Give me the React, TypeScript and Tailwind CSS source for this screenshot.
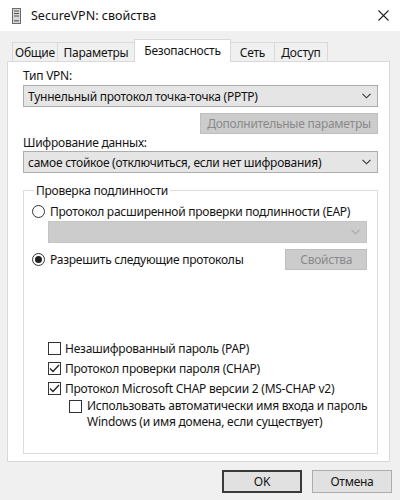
import React from "react";

const font = { fontFamily: '"Noto Sans", "Segoe UI", sans-serif' };

const Chevron = ({ color = "#333" }: { color?: string }) => (
  <svg width="9" height="6" viewBox="0 0 9 6" fill="none">
    <path d="M0.5 0.8 L4.5 4.8 L8.5 0.8" stroke={color} strokeWidth="1.1" />
  </svg>
);

const Select = ({ value, disabled }: { value?: string; disabled?: boolean }) => (
  <div
    className={`flex items-center h-[22px] pl-[4px] pr-[6px] border ${
      disabled ? "bg-[#cccccc] border-[#c4c4c4]" : "bg-[#e5e5e5] border-[#adadad]"
    }`}
  >
    <span className="flex-1 text-[12px] leading-[15px] text-[#111]">{value}</span>
    <Chevron color={disabled ? "#a8a8a8" : "#333"} />
  </div>
);

const Radio = ({ checked, label }: { checked?: boolean; label: string }) => (
  <div className="flex items-center gap-[5px] h-[15px]">
    <span className="w-[13px] h-[13px] rounded-full border border-[#333] bg-white flex items-center justify-center">
      {checked && <span className="w-[7px] h-[7px] rounded-full bg-[#222]" />}
    </span>
    <span className="text-[12px] leading-[15px]">{label}</span>
  </div>
);

const Check = ({ checked }: { checked?: boolean }) => (
  <span className="w-[13px] h-[13px] shrink-0 border border-[#333] bg-white flex items-center justify-center">
    {checked && (
      <svg width="11" height="9" viewBox="0 0 11 9" fill="none">
        <path d="M1 4.5 L4 7.5 L10 1" stroke="#222" strokeWidth="1.3" />
      </svg>
    )}
  </span>
);

const CheckRow = ({ checked, label }: { checked?: boolean; label: string }) => (
  <div className="flex items-center gap-[4px] h-[20px]">
    <Check checked={checked} />
    <span className="text-[12px] leading-[15px]">{label}</span>
  </div>
);

const tabs = [
  { name: "Общие", w: "w-[46px]" },
  { name: "Параметры", w: "w-[78px]" },
  { name: "Безопасность", w: "w-[97px]", active: true },
  { name: "Сеть", w: "w-[45px]" },
  { name: "Доступ", w: "w-[54px]" },
];

export default function App() {
  return (
    <div
      className="w-[400px] h-[500px] bg-[#f0f0f0] flex flex-col text-[#141414] tracking-[-0.25px] overflow-hidden"
      style={font}
    >
      {/* Title bar */}
      <div className="h-[31px] bg-white flex items-center pl-[12px] pr-[10px]">
        <svg width="9" height="16" viewBox="0 0 9 16">
          <rect x="0.5" y="0.5" width="8" height="15" fill="#d6d6d6" stroke="#6b6b6b" />
          <rect x="2" y="2.5" width="5" height="1" fill="#555" />
          <rect x="2" y="5" width="5" height="1" fill="#555" />
          <rect x="2" y="7.5" width="5" height="1" fill="#555" />
          <rect x="2" y="12" width="5" height="1.5" fill="#777" />
        </svg>
        <span className="ml-[10px] text-[12.5px] leading-[16px] tracking-normal text-[#111]">SecureVPN: свойства</span>
        <span className="flex-1" />
        <svg width="11" height="11" viewBox="0 0 11 11" className="mr-[1px]">
          <path d="M0.5 0.5 L10.5 10.5 M10.5 0.5 L0.5 10.5" stroke="#222" strokeWidth="1.1" />
        </svg>
      </div>

      {/* Tabs */}
      <div className="flex items-end pl-[12px] mt-[8px] h-[22px] relative z-10">
        {tabs.map((t) => (
          <div
            key={t.name}
            className={`${t.w} flex items-center justify-center text-[12px] leading-[15px] border-t border-l border-r border-[#d9d9d9] -ml-px first:ml-0 ${
              t.active ? "h-[23px] bg-white -mb-px pb-[2px]" : "h-[19px] bg-[#f0f0f0]"
            }`}
          >
            {t.name}
          </div>
        ))}
      </div>

      {/* Panel */}
      <div className="ml-[7px] w-[383px] h-[401px] bg-white border border-[#d9d9d9] pl-[15px] pr-[11px] pt-[6px] flex flex-col">
        <div className="text-[12px] leading-[15px]">Тип VPN:</div>
        <div className="mt-[2px]">
          <Select value="Туннельный протокол точка-точка (PPTP)" />
        </div>
        <div className="flex justify-end mt-[6px]">
          <div className="w-[178px] h-[21px] bg-[#cccccc] border border-[#bfbfbf] flex items-center justify-center text-[12px] text-[#8a8a8a]">
            Дополнительные параметры
          </div>
        </div>
        <div className="text-[12px] leading-[15px] mt-[1px]">Шифрование данных:</div>
        <div className="mt-[1px]">
          <Select value="самое стойкое (отключиться, если нет шифрования)" />
        </div>

        <fieldset className="mt-[10px] border border-[#dcdcdc] h-[271px] pl-[8px] pr-[10px]">
          <legend className="ml-[2px] px-[2px] text-[12px] leading-[15px]">Проверка подлинности</legend>
          <div className="mt-[6px]">
            <Radio label="Протокол расширенной проверки подлинности (EAP)" />
          </div>
          <div className="ml-[16px] mt-[2px]">
            <Select disabled />
          </div>
          <div className="flex items-center justify-between mt-[6px]">
            <Radio checked label="Разрешить следующие протоколы" />
            <div className="w-[82px] h-[21px] bg-[#cccccc] border border-[#bfbfbf] flex items-center justify-center text-[12px] text-[#8a8a8a]">
              Свойства
            </div>
          </div>
          <div className="ml-[16px] mt-[68px] flex flex-col">
            <CheckRow label="Незашифрованный пароль (PAP)" />
            <CheckRow checked label="Протокол проверки пароля (CHAP)" />
            <CheckRow checked label="Протокол Microsoft CHAP версии 2 (MS-CHAP v2)" />
            <div className="flex items-start gap-[5px] ml-[21px]">
              <span className="mt-[2px]">
                <Check />
              </span>
              <div className="flex flex-col text-[12px] leading-[16px] whitespace-nowrap">
                <span>Использовать автоматически имя входа и пароль</span>
                <span>Windows (и имя домена, если существует)</span>
              </div>
            </div>
          </div>
        </fieldset>
      </div>

      {/* Dialog buttons */}
      <div className="flex justify-end gap-[10px] pr-[8px] mt-[8px]">
        <div className="w-[80px] h-[23px] bg-[#e1e1e1] border-2 border-[#3a3a3a] flex items-center justify-center text-[12px]">
          OK
        </div>
        <div className="w-[80px] h-[23px] bg-[#e1e1e1] border border-[#adadad] flex items-center justify-center text-[12px]">
          Отмена
        </div>
      </div>
    </div>
  );
}
